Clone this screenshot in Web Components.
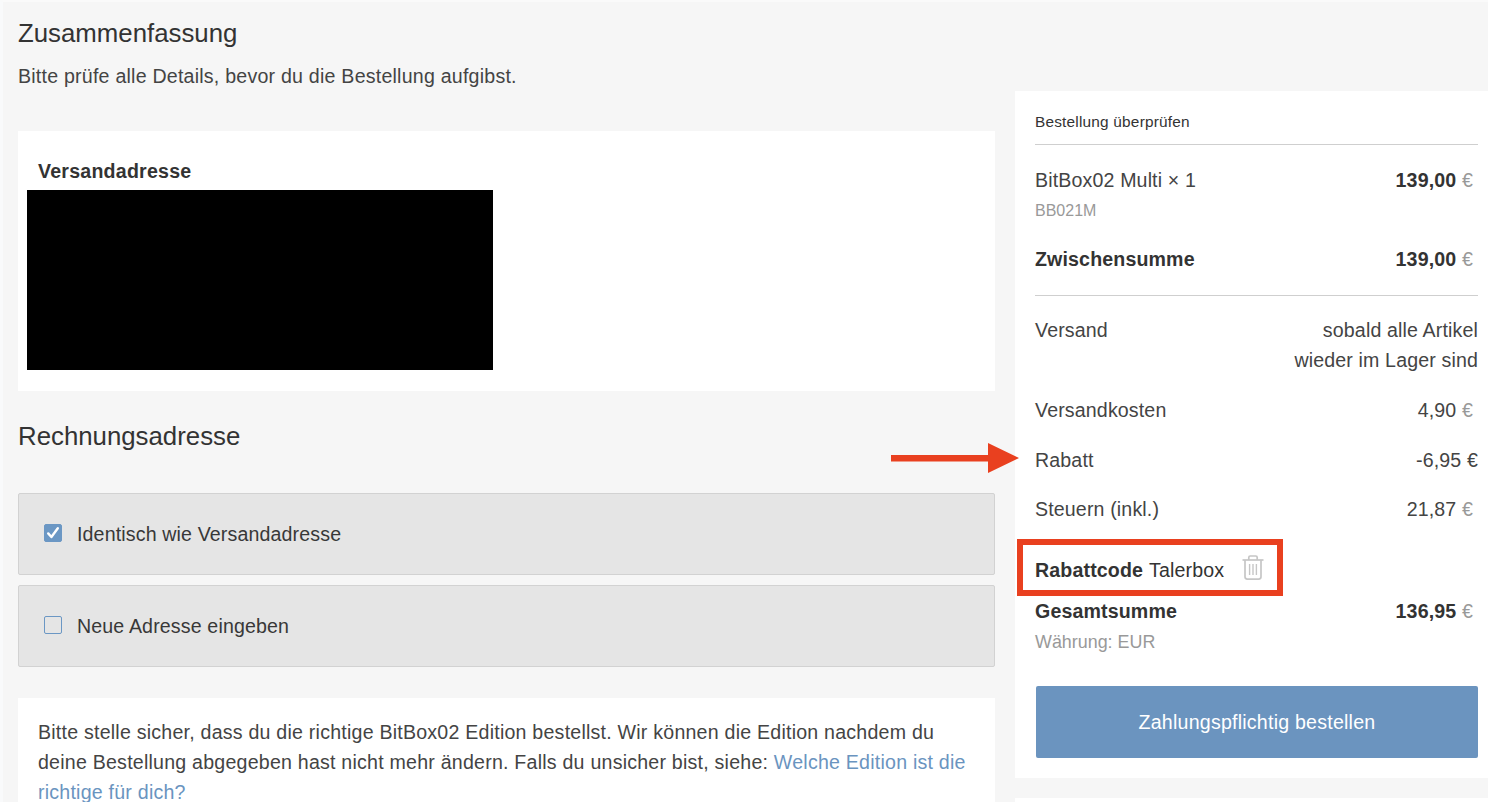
<!DOCTYPE html>
<html lang="de">
<head>
<meta charset="utf-8">
<title>Zusammenfassung</title>
<style>
  html, body { margin: 0; height: 802px; overflow: hidden; }
  body { background: #f6f6f6; font-family: "Liberation Sans", Arial, sans-serif; color: #333; }
  a { color: #6a94bf; text-decoration: none; }
</style>
</head>
<body>
<checkout-page>
  <section-title slot="left" style="--top: 16px; --bottom: 13px;">Zusammenfassung</section-title>
  <plain-text slot="left" style="--bottom: 40px;">Bitte prüfe alle Details, bevor du die Bestellung aufgibst.</plain-text>
  <address-card slot="left">Versandadresse</address-card>
  <section-title slot="left" style="--top: 30px; --bottom: 42px;">Rechnungsadresse</section-title>
  <choice-row slot="left" checked>Identisch wie Versandadresse</choice-row>
  <choice-row slot="left">Neue Adresse eingeben</choice-row>
  <notice-card slot="left">Bitte stelle sicher, dass du die richtige BitBox02 Edition bestellst. Wir können die Edition nachdem du deine Bestellung abgegeben hast nicht mehr ändern. Falls du unsicher bist, siehe: <a href="#">Welche Edition ist die richtige für dich?</a></notice-card>

  <order-card slot="right"></order-card>
</checkout-page>

<script>
const BASE = `*{box-sizing:border-box}`;
const BODY_TEXT = `font-size: 19.6px; letter-spacing: .22px;`;
const ROW_TEXT = `font-size: 19.6px; letter-spacing: .14px;`;

function el(html) {
  const t = document.createElement("template");
  t.innerHTML = html;
  return t;
}

class Base extends HTMLElement {
  constructor() {
    super();
    this.attachShadow({ mode: "open" });
    this.shadowRoot.appendChild(this.constructor.template.content.cloneNode(true));
  }
}

class CheckoutPage extends Base {
  static template = el(`<style>${BASE}
    :host { display: block; position: relative; box-sizing: border-box; height: 802px; overflow: hidden;
      border-left: 3px solid #f9fafb; border-top: 2px solid #fafafa; }
    .wrap { display: grid; grid-template-columns: 977px 1fr; column-gap: 20px; padding-left: 15px; }
    .right { padding-top: 89px; }
    .next { height: 40px; margin-top: 20px; background: #fff; }
  </style>
  <div class="wrap">
    <div class="left"><slot name="left"></slot></div>
    <div class="right"><slot name="right"></slot><div class="next"></div></div>
  </div>`);
}

class SectionTitle extends Base {
  static template = el(`<style>
    :host { display: block; font-size: 25.8px; line-height: 30px; color: #333;
      margin: var(--top, 0) 0 var(--bottom, 0); }
  </style><slot></slot>`);
}

class PlainText extends Base {
  static template = el(`<style>
    :host { display: block; ${BODY_TEXT} line-height: 30px; color: #444;
      margin: 0 0 var(--bottom, 0); }
  </style><slot></slot>`);
}

class AddressCard extends Base {
  static template = el(`<style>${BASE}
    :host { display: block; box-sizing: border-box; background: #fff; height: 260px; padding: 25px 9px 0; }
    .h { font-weight: bold; ${BODY_TEXT} line-height: 30px; color: #333; padding-left: 11px; height: 34px; }
    .black { width: 466px; height: 180px; background: #000; }
  </style>
  <div class="h"><slot></slot></div>
  <div class="black"></div>`);
}

class ChoiceRow extends Base {
  static template = el(`<style>${BASE}
    :host { display: flex; align-items: center; box-sizing: border-box; height: 82px; margin-bottom: 10px;
      background: #e5e5e5; border: 1px solid #d2d2d2; border-radius: 2px;
      padding: 0 0 0 25px; ${ROW_TEXT} color: #383838; }
    .box { width: 18px; height: 18px; margin-top: -2px; border-radius: 2px; border: 1px solid #6b97c4;
      margin-right: 15px; flex: none; display: flex; align-items: center; justify-content: center; }
    :host([checked]) .box { background: #6b97c4; }
    svg { display: none; }
    :host([checked]) svg { display: block; }
  </style>
  <span class="box"><svg width="14" height="14" viewBox="0 0 14 14" fill="none"><path d="M2.2 7.4 5.4 11 11.8 2.2" stroke="#fff" stroke-width="2.4" stroke-linecap="round" stroke-linejoin="round"/></svg></span>
  <span><slot></slot></span>`);
}

class NoticeCard extends Base {
  static template = el(`<style>${BASE}
    :host { display: block; background: #fff; margin-top: 31px; padding: 19px 20px 10px;
      ${BODY_TEXT} line-height: 30px; color: #444; }
  </style><slot></slot>`);
}

class OrderRow extends Base {
  static template = el(`<style>${BASE}
    :host { display: flex; justify-content: space-between; align-items: flex-start;
      ${ROW_TEXT} line-height: 30px; color: #444; height: var(--h, 30px); }
    :host([strong]) { font-weight: bold; color: #333; }
    .val { text-align: right; }
  </style>
  <span><slot></slot></span><span class="val"><slot name="val"></slot></span>`);
}

class PriceTag extends Base {
  static template = el(`<style>
    :host { display: inline-block; padding-right: 5px; font-weight: bold; color: #333; }
    :host([plain]) { font-weight: normal; color: #444; }
    .c { color: #999; font-weight: normal; }
  </style><slot></slot> <span class="c">€</span>`);
}

class TrashIcon extends Base {
  static template = el(`<style>:host { display: inline-flex; }</style>
  <svg width="22" height="25" viewBox="0 0 22 25" fill="none" stroke="#c6c6c6" stroke-width="1.7">
    <path d="M.5 5h21"/>
    <path d="M6.8 5V2.4c0-.8.6-1.4 1.4-1.4h5.6c.8 0 1.4.6 1.4 1.4V5"/>
    <path d="M3 5v16.8c0 1.3 1 2.3 2.3 2.3h11.4c1.3 0 2.3-1 2.3-2.3V5"/>
    <path d="M7.6 9v11M11 9v11M14.4 9v11" stroke-width="1.4"/>
  </svg>`);
}

class OrderCard extends Base {
  static template = el(`<style>${BASE}
    :host { display: block; box-sizing: border-box; background: #fff; height: 687px; padding: 0 10px 0 20px; position: relative; }
    .title { font-size: 15.4px; letter-spacing: .2px; line-height: 20px; padding-top: 21px; height: 54px; color: #333;
      border-bottom: 1px solid #cfcfcf; }
    .sku { font-size: 16px; line-height: 20px; color: #999; height: 48px; padding-top: 5px; }
    .cur { font-size: 17.9px; line-height: 20px; color: #999; height: 60px; padding-top: 6px; }
    hr { border: 0; border-top: 1px solid #cfcfcf; margin: 0; }
    .code { display: flex; align-items: center; ${ROW_TEXT} height: 30px; color: #333; }
    .code b { margin-right: 6px; }
    .code trash-icon { margin-left: 18px; margin-bottom: 5px; }
    button { display: block; width: 442px; height: 72px; margin: 0 0 0 1px; border: 0; border-radius: 2px;
      background: #6b94bf; color: #fff; font-family: "Liberation Sans", Arial, sans-serif; ${BODY_TEXT} padding: 0; }
  </style>
  <div class="title">Bestellung überprüfen</div>
  <order-row style="--h: 31px; margin-top: 20px;">BitBox02 Multi × 1<price-tag slot="val">139,00</price-tag></order-row>
  <div class="sku">BB021M</div>
  <order-row strong style="--h: 51px;">Zwischensumme<price-tag slot="val">139,00</price-tag></order-row>
  <hr>
  <order-row style="--h: 80px; margin-top: 19px;">Versand<span slot="val">sobald alle Artikel<br>wieder im Lager sind</span></order-row>
  <order-row style="--h: 50px;">Versandkosten<price-tag plain slot="val">4,90</price-tag></order-row>
  <order-row style="--h: 49px;">Rabatt<span slot="val">-6,95 €</span></order-row>
  <order-row style="--h: 61px;">Steuern (inkl.)<price-tag plain slot="val">21,87</price-tag></order-row>
  <div class="code"><b>Rabattcode</b> Talerbox<trash-icon></trash-icon></div>
  <order-row strong style="--h: 30px; margin-top: 11px;">Gesamtsumme<price-tag slot="val">136,95</price-tag></order-row>
  <div class="cur">Währung: EUR</div>
  <button>Zahlungspflichtig bestellen</button>
  <red-arrow></red-arrow>
  <red-frame></red-frame>`);
}

class RedArrow extends Base {
  static template = el(`<style>
    :host { position: absolute; left: -124px; top: 351px; width: 140px; height: 32px; display: block; }
  </style>
  <svg width="140" height="32" viewBox="0 0 140 32"><path d="M0 13h97V1l31 15-31 15V19.5H0z" fill="#e9401f"/></svg>`);
}

class RedFrame extends Base {
  static template = el(`<style>
    :host { position: absolute; left: 2px; top: 448px; width: 266px; height: 57px; display: block;
      border: 6px solid #e9401f; box-sizing: border-box; }
  </style>`);
}

customElements.define("checkout-page", CheckoutPage);
customElements.define("section-title", SectionTitle);
customElements.define("plain-text", PlainText);
customElements.define("address-card", AddressCard);
customElements.define("choice-row", ChoiceRow);
customElements.define("notice-card", NoticeCard);
customElements.define("order-row", OrderRow);
customElements.define("price-tag", PriceTag);
customElements.define("trash-icon", TrashIcon);
customElements.define("order-card", OrderCard);
customElements.define("red-arrow", RedArrow);
customElements.define("red-frame", RedFrame);
</script>
</body>
</html>
